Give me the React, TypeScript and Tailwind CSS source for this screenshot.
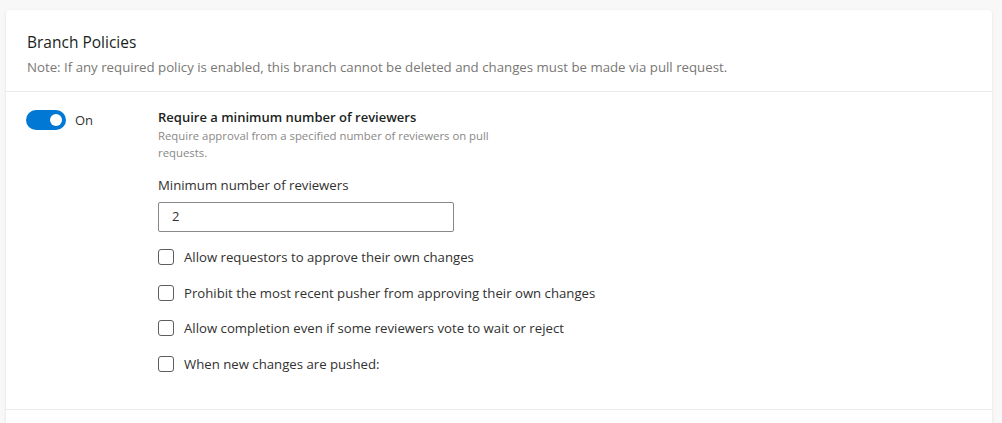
import React from "react";

const font = { fontFamily: "'Open Sans', 'Noto Sans', 'Liberation Sans', sans-serif" };

function Checkbox({ label }: { label: string }) {
  return (
    <div className="flex h-[20px] items-center">
      <div className="h-[16px] w-[16px] rounded-[3px] border border-[#605e5c] bg-white" />
      <span className="ml-[10px] text-[13.2px] leading-[20px] text-[#323130]">{label}</span>
    </div>
  );
}

export default function App() {
  return (
    <div className="h-screen overflow-hidden bg-[#f8f8f8] pl-[6px] pr-[10px] pt-[10px]" style={font}>
      <div className="rounded-[4px] bg-white shadow-[0_1px_3px_rgba(0,0,0,0.1)]">
        <div className="border-b border-[#eaeaea] px-[21px] pb-[14px] pt-[22px]">
          <div className="text-[15.5px] leading-[20px] text-[#201f1e]">Branch Policies</div>
          <div className="mt-[5px] text-[13.25px] leading-[20px] text-[#797775]">
            Note: If any required policy is enabled, this branch cannot be deleted and changes must be made via pull request.
          </div>
        </div>
        <div className="flex border-b border-[#eaeaea] pb-[35px] pt-[15px]">
          <div className="flex w-[152px] shrink-0 items-start pl-[20px] pt-[3px]">
            <div className="flex items-center">
              <div className="flex h-[20px] w-[40px] items-center justify-end rounded-full bg-[#0078d4] pr-[4px]">
                <div className="h-[12px] w-[12px] rounded-full bg-white" />
              </div>
              <span className="ml-[9px] text-[13px] leading-[18px] text-[#323130]">On</span>
            </div>
          </div>
          <div className="flex flex-col">
            <div className="text-[13px] font-semibold leading-[20px] text-[#201f1e]">Require a minimum number of reviewers</div>
            <div className="w-[345px] text-[11.35px] leading-[17px] text-[#8a8886]">
              Require approval from a specified number of reviewers on pull requests.
            </div>
            <div className="mt-[14px] text-[13.2px] leading-[20px] text-[#323130]">Minimum number of reviewers</div>
            <div className="mt-[7px] flex h-[30px] w-[296px] items-center rounded-[2px] border border-[#8a8886] px-[13px] text-[13px] text-[#323130]">
              2
            </div>
            <div className="mt-[15px] flex flex-col gap-[15.5px]">
              <Checkbox label="Allow requestors to approve their own changes" />
              <Checkbox label="Prohibit the most recent pusher from approving their own changes" />
              <Checkbox label="Allow completion even if some reviewers vote to wait or reject" />
              <Checkbox label="When new changes are pushed:" />
            </div>
          </div>
        </div>
        <div className="h-[40px]" />
      </div>
    </div>
  );
}
